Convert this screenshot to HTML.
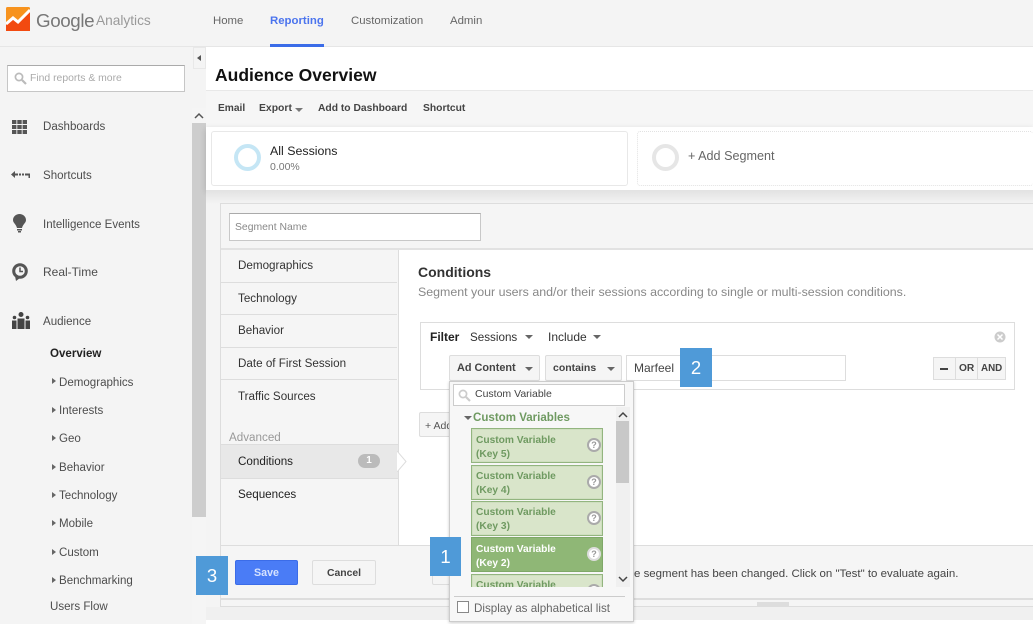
<!DOCTYPE html>
<html><head><meta charset="utf-8"><style>
html,body{margin:0;padding:0;width:1033px;height:624px;overflow:hidden;background:#f4f4f4;font-family:"Liberation Sans",sans-serif;color:#444}
.a{position:absolute}
.t{position:absolute;white-space:nowrap;line-height:14px;font-size:12px}
.s{color:#4d4d4d;font-size:11.55px;margin-top:1px}
.p{font-size:11.65px;margin-top:1px}
.b{font-weight:bold}
.tab{position:absolute;left:221px;width:176px;height:32px;border-bottom:1px solid #ddd}
.card{position:absolute;left:471px;width:130px;height:33px;background:#d9e5ca;border:1px solid #93b57f;box-shadow:inset 0 0 0 1px #cfdfc0}
.card span{position:absolute;left:4px;top:5px;font-size:10.2px;line-height:13.6px;font-weight:bold;color:#6f9a61;white-space:nowrap}
.q{position:absolute;left:115px;top:9px;width:10px;height:10px;border:2px solid #aaa;border-radius:50%;background:#fff;color:#999;font-size:9px;line-height:10px;text-align:center;font-weight:bold}
.num{position:absolute;background:#4f9ad8;color:#fff;font-size:18.5px;text-align:center;font-family:"Liberation Sans",sans-serif;font-weight:normal}
.tri{position:absolute;left:52px;width:0;height:0;border-left:4px solid #666;border-top:3.5px solid transparent;border-bottom:3.5px solid transparent}
.drop{position:absolute;width:0;height:0;border-top:4px solid #666;border-left:4px solid transparent;border-right:4px solid transparent}
.btn{position:absolute;background:#f5f5f5;border:1px solid #ddd;box-sizing:border-box;border-radius:2px}
</style></head><body>

<!-- header -->
<div class="a" style="left:0;top:0;width:1033px;height:46px;background:#f4f4f4;border-bottom:1px solid #e6e6e6"></div>
<svg class="a" style="left:6px;top:7px" width="24" height="24" viewBox="0 0 24 24">
<rect width="24" height="24" rx="1.5" fill="#f7931e"/>
<path d="M0 24V17L7 11L12 15L24 3V24Z" fill="#f24a10"/>
<path d="M0 17L7 11L12 15L24 3" fill="none" stroke="#fff" stroke-width="3"/>
</svg>
<div class="t" style="left:36px;top:10px;font-size:18.8px;line-height:22px;color:#777;letter-spacing:-.4px">Google</div>
<div class="t" style="left:96px;top:11px;font-size:13.7px;line-height:20px;color:#999">Analytics</div>
<div class="t" style="left:213px;top:14px;font-size:11.4px;color:#666">Home</div>
<div class="t b" style="left:270px;top:14px;font-size:11.4px;color:#4b74ee">Reporting</div>
<div class="a" style="left:270px;top:44px;width:54px;height:3px;background:#3b6ce8"></div>
<div class="t" style="left:351px;top:14px;font-size:11.4px;color:#666">Customization</div>
<div class="t" style="left:450px;top:14px;font-size:11.4px;color:#666">Admin</div>

<!-- sidebar -->
<div class="a" style="left:7px;top:65px;width:176px;height:25px;background:#fff;border:1px solid #c6c6c6;border-top-color:#aaa"></div>
<svg class="a" style="left:14px;top:72px" width="13" height="13" viewBox="0 0 13 13"><circle cx="5" cy="5" r="3.6" fill="none" stroke="#bbb" stroke-width="1.7"/><path d="M8 8L12 12" stroke="#bbb" stroke-width="2.2"/></svg>
<div class="t" style="left:30px;top:72px;font-size:10.4px;color:#aaa">Find reports &amp; more</div>

<svg class="a" style="left:12px;top:120px" width="15" height="14" viewBox="0 0 15 14" fill="#555"><rect width="4.4" height="4"/><rect x="5.300" width="4.400" height="4"/><rect x="10.600" width="4.400" height="4"/><rect y="5" width="4.400" height="4"/><rect x="5.300" y="5" width="4.400" height="4"/><rect x="10.600" y="5" width="4.400" height="4"/><rect y="10" width="4.400" height="4"/><rect x="5.300" y="10" width="4.400" height="4"/><rect x="10.600" y="10" width="4.400" height="4"/></svg>
<div class="t s" style="left:43px;top:119px">Dashboards</div>

<svg class="a" style="left:11px;top:171px" width="19" height="7" viewBox="0 0 19 7" fill="#555"><path d="M0 3.500L4 0V2.500H7V4.500H4V7Z"/><rect x="8" y="2.500" width="2" height="2"/><rect x="11" y="2.500" width="2" height="2"/><path d="M14 2.500H19V7H17.500V4.500H14Z"/></svg>
<div class="t s" style="left:43px;top:168px">Shortcuts</div>

<svg class="a" style="left:13px;top:214px" width="13" height="19" viewBox="0 0 13 19" fill="#555"><path d="M6.500 0C10 0 13 2.500 13 6C13 9 10 10 9 14H4C3 10 0 9 0 6C0 2.500 3 0 6.500 0Z"/><rect x="4" y="15" width="5" height="1.500"/><rect x="5" y="17" width="3" height="1.500"/></svg>
<div class="t s" style="left:43px;top:217px">Intelligence Events</div>

<svg class="a" style="left:12px;top:263px" width="16" height="18" viewBox="0 0 16 18"><circle cx="8" cy="8" r="6.300" fill="#f4f4f4" stroke="#555" stroke-width="3"/><path d="M3 13L4 18L8 15Z" fill="#555"/><path d="M8 4.500V8.500H11" fill="none" stroke="#555" stroke-width="1.500"/></svg>
<div class="t s" style="left:43px;top:265px;font-size:12px;margin-top:0">Real-Time</div>

<svg class="a" style="left:12px;top:312px" width="18" height="17" viewBox="0 0 18 17" fill="#444"><circle cx="9" cy="2.500" r="2.500"/><circle cx="2.500" cy="5.500" r="1.800"/><circle cx="15.500" cy="5.500" r="1.800"/><path d="M5.500 6.500H12.500V17H5.500Z"/><path d="M0 8.500H4.500V17H0Z"/><path d="M13.500 8.500H18V17H13.500Z"/></svg>
<div class="t s" style="left:43px;top:314px">Audience</div>

<div class="t b" style="left:50px;top:347px;font-size:11.55px;color:#222">Overview</div>
<div class="tri" style="top:378px"></div><div class="t s" style="left:59px;top:375px">Demographics</div>
<div class="tri" style="top:407px"></div><div class="t s" style="left:59px;top:403px">Interests</div>
<div class="tri" style="top:435px"></div><div class="t s" style="left:59px;top:431px">Geo</div>
<div class="tri" style="top:464px"></div><div class="t s" style="left:59px;top:460px">Behavior</div>
<div class="tri" style="top:492px"></div><div class="t s" style="left:59px;top:488px">Technology</div>
<div class="tri" style="top:520px"></div><div class="t s" style="left:59px;top:516px">Mobile</div>
<div class="tri" style="top:549px"></div><div class="t s" style="left:59px;top:545px">Custom</div>
<div class="tri" style="top:577px"></div><div class="t s" style="left:59px;top:573px">Benchmarking</div>
<div class="t s" style="left:50px;top:599px">Users Flow</div>

<!-- scrollbar -->
<div class="a" style="left:192px;top:108px;width:14px;height:516px;background:#f5f5f5"></div>
<div class="a" style="left:192px;top:123px;width:14px;height:394px;background:#cdcdcd"></div>
<svg class="a" style="left:194px;top:112px" width="10" height="7"><path d="M1 6L5 2L9 6" fill="none" stroke="#555" stroke-width="1.500"/></svg>
<div class="a" style="left:193px;top:47px;width:13px;height:22px;background:#f4f4f4;border:1px solid #e8e8e8;box-sizing:border-box"></div>
<div class="a" style="left:197px;top:55px;width:0;height:0;border-right:4px solid #555;border-top:3.500px solid transparent;border-bottom:3.500px solid transparent"></div>

<!-- main -->
<div class="a" style="left:206px;top:47px;width:827px;height:577px;background:#fff"></div>
<div class="t b" style="left:215px;top:65px;font-size:17.5px;line-height:21px;color:#111">Audience Overview</div>
<div class="a" style="left:206px;top:90px;width:827px;height:37px;background:#f6f6f6;border-top:1px solid #e8e8e8;border-bottom:1px solid #e4e4e4"></div>
<div class="t b" style="left:218px;top:102px;font-size:10.2px;color:#444">Email</div>
<div class="t b" style="left:259px;top:102px;font-size:10.4px;color:#444">Export</div>
<div class="drop" style="left:295px;top:108px;border-top-color:#777"></div>
<div class="t b" style="left:318px;top:102px;font-size:10.3px;color:#444">Add to Dashboard</div>
<div class="t b" style="left:423px;top:102px;font-size:10.3px;color:#444">Shortcut</div>

<div class="a" style="left:206px;top:127px;width:827px;height:63px;background:#fff;box-shadow:0 2px 6px rgba(0,0,0,.16)"></div>
<div class="a" style="left:206px;top:190px;width:827px;height:434px;background:#f4f4f4"></div>
<div class="a" style="left:206px;top:190px;width:827px;height:14px;background:linear-gradient(#e2e2e2,#f4f4f4)"></div>
<div class="a" style="left:211px;top:131px;width:415px;height:53px;border:1px solid #e8e8e8;border-radius:3px;background:#fff"></div>
<div class="a" style="left:234px;top:144px;width:19px;height:19px;border:4px solid #c5e6f5;border-radius:50%"></div>
<div class="t" style="left:270px;top:144px;font-size:12.4px;color:#222">All Sessions</div>
<div class="t" style="left:270px;top:160px;font-size:10.5px;color:#777">0.00%</div>
<div class="a" style="left:637px;top:131px;width:396px;height:55px;border:1px dotted #e2e2e2;border-right:0;border-radius:3px;box-sizing:border-box;background:#fff"></div>
<div class="a" style="left:652px;top:144px;width:19px;height:19px;border:4px solid #e6e6e6;border-radius:50%"></div>
<div class="t" style="left:688px;top:149px;font-size:12.6px;color:#666">+ Add Segment</div>

<!-- panel -->
<div class="a" style="left:220px;top:203px;width:813px;height:404px;background:#f5f5f5;border:1px solid #ddd;border-right:0;box-sizing:border-box"></div>
<div class="a" style="left:229px;top:213px;width:250px;height:26px;background:#fff;border:1px solid #c8c8c8;border-top-color:#aaa"></div>
<div class="t" style="left:235px;top:221px;font-size:10.4px;color:#888">Segment Name</div>
<div class="a" style="left:221px;top:248px;width:812px;height:2px;background:#e2e2e2"></div>
<div class="a" style="left:398px;top:250px;width:635px;height:295px;background:#fff;border-left:1px solid #ddd;box-sizing:border-box"></div>

<div class="tab" style="top:250px"></div><div class="t p" style="left:238px;top:258px;color:#333">Demographics</div>
<div class="tab" style="top:282px"></div><div class="t p" style="left:238px;top:291px;color:#333">Technology</div>
<div class="tab" style="top:315px"></div><div class="t p" style="left:238px;top:323px;color:#333">Behavior</div>
<div class="tab" style="top:347px"></div><div class="t p" style="left:238px;top:356px;color:#333">Date of First Session</div>
<div class="t p" style="left:238px;top:389px;color:#333">Traffic Sources</div>
<div class="t p" style="left:229px;top:430px;color:#999">Advanced</div>
<div class="a" style="left:221px;top:444px;width:177px;height:33px;background:#e8e8e8;border-top:1px solid #ddd;border-bottom:1px solid #ddd"></div>
<svg class="a" style="left:397px;top:451px" width="11" height="21"><path d="M0 0L9 10.500L0 21" fill="#fff" stroke="#ddd"/></svg>
<div class="t p" style="left:238px;top:454px;color:#222">Conditions</div>
<div class="a" style="left:358px;top:454px;width:22px;height:14px;border-radius:7px;background:#bbb;color:#fff;font-size:10px;line-height:14px;text-align:center;font-weight:bold">1</div>
<div class="t p" style="left:238px;top:487px;color:#222">Sequences</div>

<div class="t b" style="left:418px;top:264px;font-size:14px;line-height:16px;color:#333">Conditions</div>
<div class="t" style="left:418px;top:285px;font-size:12.4px;color:#888">Segment your users and/or their sessions according to single or multi-session conditions.</div>

<div class="a" style="left:420px;top:322px;width:595px;height:68px;border:1px solid #ddd;box-sizing:border-box"></div>
<div class="t b" style="left:430px;top:330px;color:#222">Filter</div>
<div class="t p" style="left:470px;top:330px;color:#333">Sessions</div>
<div class="drop" style="left:525px;top:335px"></div>
<div class="t" style="left:548px;top:330px;color:#333">Include</div>
<div class="drop" style="left:593px;top:335px"></div>
<svg class="a" style="left:994px;top:331px" width="12" height="12"><circle cx="6" cy="6" r="5.500" fill="#ccc"/><path d="M3.500 3.500L8.500 8.500M8.500 3.500L3.500 8.500" stroke="#fff" stroke-width="1.500"/></svg>

<div class="btn" style="left:449px;top:355px;width:91px;height:26px"></div>
<div class="t b" style="left:457px;top:361px;font-size:10.9px;color:#444">Ad Content</div>
<div class="drop" style="left:525px;top:367px"></div>
<div class="btn" style="left:545px;top:355px;width:77px;height:26px"></div>
<div class="t b" style="left:553px;top:361px;font-size:10.5px;color:#444">contains</div>
<div class="drop" style="left:607px;top:367px"></div>
<div class="a" style="left:626px;top:355px;width:220px;height:26px;background:#fff;border:1px solid #ddd;box-sizing:border-box"></div>
<div class="t" style="left:634px;top:361px;color:#444">Marfeel</div>
<div class="btn" style="left:933px;top:357px;width:73px;height:23px;border-radius:0"></div>
<div class="a" style="left:955px;top:357px;width:1px;height:23px;background:#ddd"></div>
<div class="a" style="left:977px;top:357px;width:1px;height:23px;background:#ddd"></div>
<div class="a" style="left:940px;top:368px;width:8px;height:2px;background:#444"></div>
<div class="t b" style="left:959px;top:362px;font-size:10.2px;color:#444">OR</div>
<div class="t b" style="left:981px;top:362px;font-size:9.8px;color:#444">AND</div>

<div class="btn" style="left:419px;top:412px;width:45px;height:25px"></div>
<div class="t" style="left:425px;top:419px;font-size:10.5px;color:#555">+ Add</div>

<!-- footer -->
<div class="a" style="left:221px;top:545px;width:812px;height:54px;background:#f5f5f5;border-top:1px solid #ddd;box-sizing:border-box"></div>
<div class="a" style="left:221px;top:598px;width:812px;height:2px;background:#ddd"></div>
<div class="a" style="left:757px;top:602px;width:32px;height:4px;background:#ddd"></div>
<div class="a" style="left:206px;top:607px;width:827px;height:13px;background:#f0f0f0"></div>
<div class="a" style="left:206px;top:620px;width:827px;height:4px;background:#fff"></div>
<div class="btn" style="left:235px;top:560px;width:63px;height:25px;background:#4a7cf6;border-color:#3b6ce8"></div>
<div class="t b" style="left:254px;top:566px;font-size:10.7px;color:#d5e2ff">Save</div>
<div class="btn" style="left:312px;top:560px;width:64px;height:25px"></div>
<div class="t b" style="left:327px;top:567px;font-size:10.4px;color:#444">Cancel</div>
<div class="btn" style="left:432px;top:560px;width:40px;height:25px"></div>
<div class="t" style="left:634px;top:567px;font-size:11.47px;color:#444">e segment has been changed. Click on "Test" to evaluate again.</div>

<!-- dropdown -->
<div class="a" style="left:449px;top:381px;width:185px;height:241px;background:#f7f7f7;border:1px solid #ccc;box-sizing:border-box;box-shadow:0 1px 3px rgba(0,0,0,.2)"></div>
<div class="a" style="left:453px;top:384px;width:172px;height:22px;background:#fff;border:1px solid #ccc;box-sizing:border-box"></div>
<svg class="a" style="left:458px;top:389px" width="13" height="13" viewBox="0 0 13 13"><circle cx="5" cy="5" r="3.600" fill="none" stroke="#ccc" stroke-width="1.700"/><path d="M8 8L12 12" stroke="#ccc" stroke-width="2.200"/></svg>
<div class="t" style="left:475px;top:387px;font-size:10.5px;color:#444">Custom Variable</div>
<div class="drop" style="left:464px;top:416px"></div>
<div class="t b" style="left:473px;top:411px;font-size:11.55px;color:#6f9a61">Custom Variables</div>

<div class="card" style="top:428px"><span>Custom Variable<br>(Key 5)</span><div class="q">?</div></div>
<div class="card" style="top:465px"><span style="top:4px">Custom Variable<br>(Key 4)</span><div class="q">?</div></div>
<div class="card" style="top:501px"><span style="top:4px">Custom Variable<br>(Key 3)</span><div class="q">?</div></div>
<div class="card" style="top:537px;background:#8fb776;border-color:#7fa868;box-shadow:none"><span style="color:#fff">Custom Variable<br>(Key 2)</span><div class="q" style="border-color:#ddd;color:#999">?</div></div>
<div class="a" style="left:471px;top:574px;width:132px;height:13px;overflow:hidden"><div class="card" style="left:0;top:0"><span style="top:4px">Custom Variable</span><div class="q">?</div></div></div>

<div class="a" style="left:616px;top:407px;width:14px;height:180px;background:#f0f0f0"></div>
<div class="a" style="left:616px;top:421px;width:13px;height:62px;background:#c8c8c8"></div>
<svg class="a" style="left:618px;top:411px" width="10" height="7"><path d="M1 6L5 2L9 6" fill="none" stroke="#444" stroke-width="1.500"/></svg>
<svg class="a" style="left:618px;top:576px" width="10" height="7"><path d="M1 1L5 5L9 1" fill="none" stroke="#444" stroke-width="1.500"/></svg>
<div class="a" style="left:454px;top:596px;width:171px;height:1px;background:#ccc"></div>
<div class="a" style="left:457px;top:601px;width:10px;height:10px;background:#fff;border:1px solid #888"></div>
<div class="t" style="left:474px;top:602px;font-size:11.6px;color:#666">Display as alphabetical list</div>

<!-- numbered badges -->
<div class="num" style="left:430px;top:537px;width:31px;height:39px;line-height:39px">1</div>
<div class="num" style="left:680px;top:348px;width:32px;height:39px;line-height:39px">2</div>
<div class="num" style="left:196px;top:556px;width:32px;height:39px;line-height:39px">3</div>
</body></html>
